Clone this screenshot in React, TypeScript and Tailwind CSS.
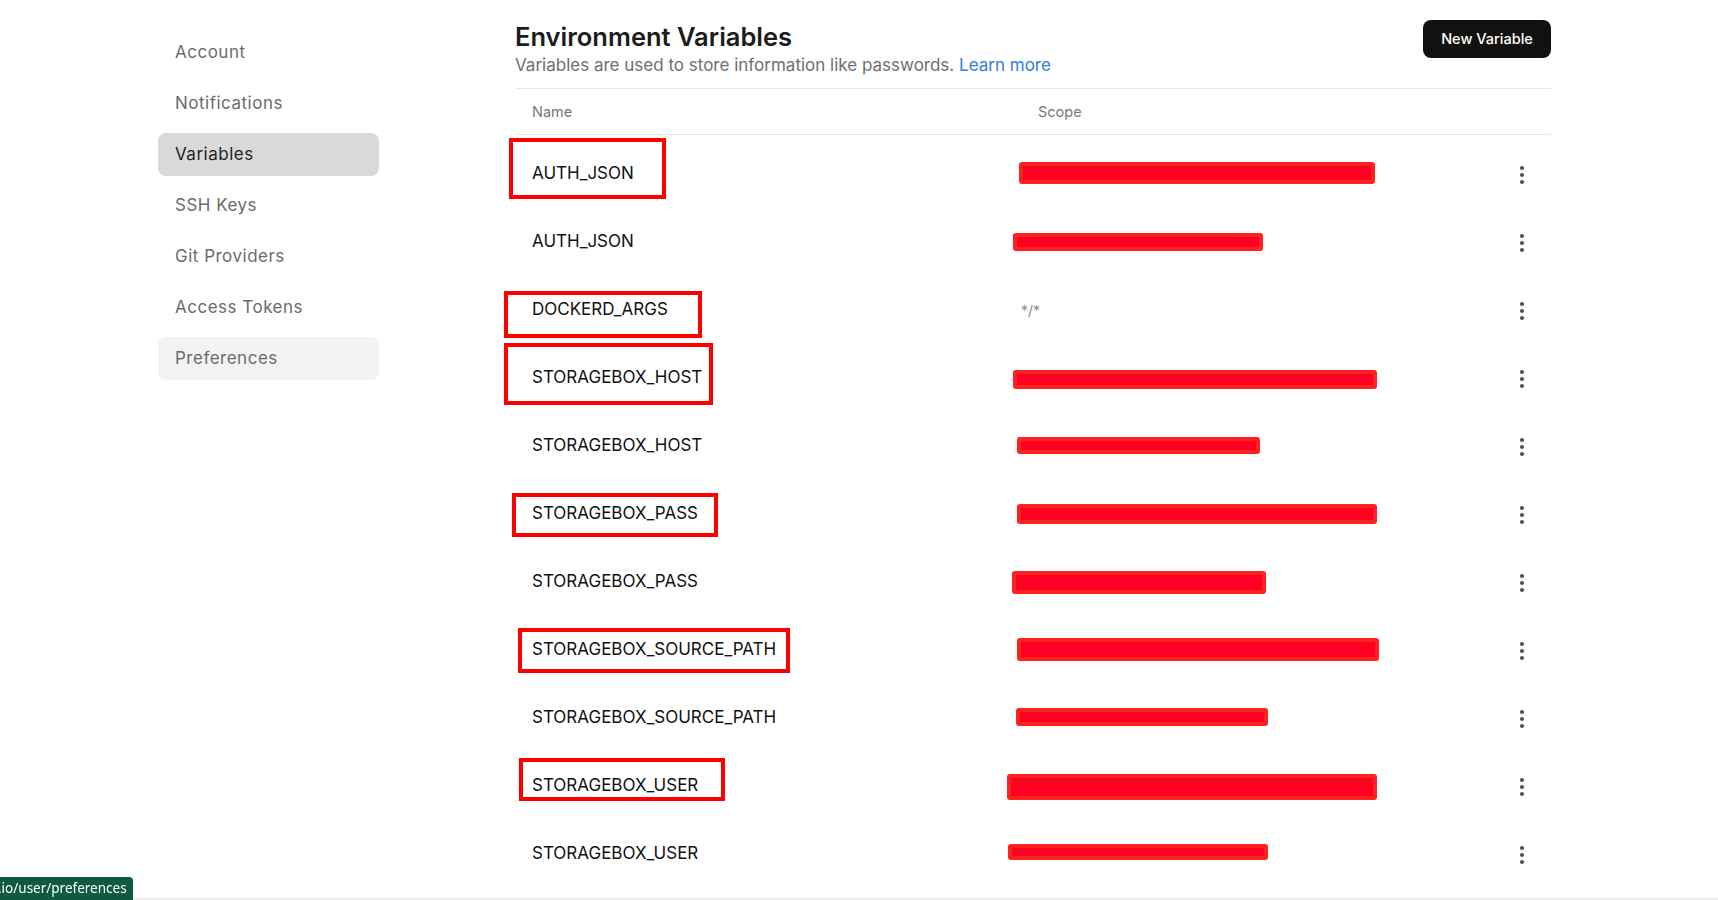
import React from "react";

type Row = {
  name: string;
  scope?: string;
  bar?: { ml: number; w: number; h: number; dy: number };
  box?: { left: number; top: number; w: number; h: number };
};

const rows: Row[] = [
  { name: "AUTH_JSON", bar: { ml: 6, w: 356, h: 22, dy: -1 }, box: { left: -6, top: -2, w: 157, h: 61 } },
  { name: "AUTH_JSON", bar: { ml: 0, w: 250, h: 18, dy: 0 } },
  { name: "DOCKERD_ARGS", scope: "*/*", box: { left: -11, top: 15, w: 198, h: 47 } },
  { name: "STORAGEBOX_HOST", bar: { ml: 0, w: 364, h: 19, dy: 1 }, box: { left: -11, top: -1, w: 209, h: 62 } },
  { name: "STORAGEBOX_HOST", bar: { ml: 4, w: 243, h: 17, dy: -1 } },
  { name: "STORAGEBOX_PASS", bar: { ml: 4, w: 360, h: 20, dy: 0 }, box: { left: -3, top: 13, w: 206, h: 44 } },
  { name: "STORAGEBOX_PASS", bar: { ml: -1, w: 254, h: 23, dy: 0 } },
  { name: "STORAGEBOX_SOURCE_PATH", bar: { ml: 4, w: 362, h: 23, dy: -1 }, box: { left: 3, top: 12, w: 272, h: 45 } },
  { name: "STORAGEBOX_SOURCE_PATH", bar: { ml: 3, w: 252, h: 18, dy: -1 } },
  { name: "STORAGEBOX_USER", bar: { ml: -6, w: 370, h: 26, dy: 1 }, box: { left: 4, top: 6, w: 206, h: 43 } },
  { name: "STORAGEBOX_USER", bar: { ml: -5, w: 260, h: 16, dy: -2 } },
];

const nav = ["Account", "Notifications", "Variables", "SSH Keys", "Git Providers", "Access Tokens", "Preferences"];

function Kebab() {
  return (
    <svg width="6" height="20" viewBox="0 0 6 20" className="block">
      <circle cx="3" cy="3" r="2.1" fill="#555" />
      <circle cx="3" cy="10" r="2.1" fill="#555" />
      <circle cx="3" cy="17" r="2.1" fill="#555" />
    </svg>
  );
}

export default function App() {
  return (
    <div className="min-h-screen bg-white flex font-['Inter',sans-serif]">
      <aside className="w-[221px] ml-[158px] pt-[31px] shrink-0">
        <nav className="flex flex-col gap-[8px]">
          {nav.map((item) => (
            <div
              key={item}
              className={
                "h-[43px] rounded-lg px-[17px] flex items-center text-[17px] tracking-[0.5px] " +
                (item === "Variables"
                  ? "bg-[#d9d9d9] text-[#232323]"
                  : item === "Preferences"
                  ? "bg-[#f3f3f3] text-[#6b6b6b]"
                  : "text-[#6b6b6b]")
              }
            >
              {item}
            </div>
          ))}
        </nav>
      </aside>

      <main className="ml-[136px] w-[1036px] pt-[20px] shrink-0">
        <div className="flex justify-between items-start">
          <div>
            <h1 className="text-[25.5px] leading-[34px] font-semibold text-[#1c1c1c]">Environment Variables</h1>
            <p className="text-[17px] leading-[22px] text-[#6e6e6e]">
              Variables are used to store information like passwords.{" "}
              <a className="text-[#2f7de1]">Learn more</a>
            </p>
          </div>
          <button className="h-[38px] w-[128px] rounded-lg bg-[#13110f] text-white text-[14.5px] font-medium">
            New Variable
          </button>
        </div>

        <div className="mt-[12px] border-t border-[#e6e6e6]" />
        <div className="h-[46px] flex items-center text-[14.5px] text-[#777] border-b border-[#e6e6e6]">
          <div className="w-[523px] pl-[17px]">Name</div>
          <div>Scope</div>
        </div>

        <div className="pt-[5px]">
          {rows.map((r, i) => (
            <div key={i} className="relative h-[68px] flex items-center">
              {r.box && (
                <div
                  className="absolute border-[4px] border-[#ff0000] pointer-events-none"
                  style={{ left: r.box.left, top: r.box.top, width: r.box.w, height: r.box.h }}
                />
              )}
              <div className="w-[498px] pl-[17px] text-[17px] text-[#111]">{r.name}</div>
              <div className="flex-1 flex items-center">
                {r.scope && <span className="ml-[8px] text-[14px] text-[#888]">{r.scope}</span>}
                {r.bar && (
                  <div
                    className="relative rounded-[3px] bg-[#ff0022] border-[4px] border-[#ff2020]"
                    style={{ marginLeft: r.bar.ml, width: r.bar.w, height: r.bar.h, top: r.bar.dy }}
                  />
                )}
              </div>
              <div className="w-[34px] flex justify-start pl-[2px] relative top-[1px]">
                <Kebab />
              </div>
            </div>
          ))}
        </div>
      </main>

      <div className="fixed bottom-0 left-0 right-0 h-[2px] bg-[#ededed]" />
      <div className="fixed bottom-0 left-0 h-[23px] w-[133px] bg-[#0f5a3e] rounded-tr-[4px] overflow-hidden flex items-center">
        <span className="-ml-[2px] text-[13.5px] text-white font-['Noto_Sans',sans-serif] whitespace-nowrap">
          .io/user/preferences
        </span>
      </div>
    </div>
  );
}
